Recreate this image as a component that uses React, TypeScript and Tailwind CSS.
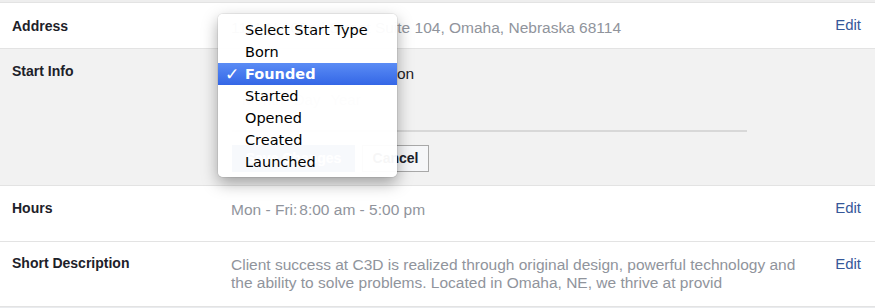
import React from "react";

const sans = { fontFamily: '"Liberation Sans", Arial, Helvetica, sans-serif' };

export default function App() {
  const items = ["Select Start Type", "Born", "Founded", "Started", "Opened", "Created", "Launched"];
  return (
    <div className="relative w-[875px] h-[308px] overflow-hidden bg-[#e9ebee]" style={sans}>
      <div className="h-[2px] bg-[#eeeeee]" />
      <div className="bg-white border-t border-[#e3e3e3]">
        {/* Address */}
        <div className="flex items-start h-[46px] pt-[13px] border-b border-[#e3e3e3]">
          <div className="w-[231px] pl-[12px] text-[14px] leading-[16px] font-bold text-[#1d2129] mt-[2px]">Address</div>
          <div className="flex-1 text-[15.5px] leading-[18px] text-[#90949c] mt-[3px]">1111 N 102nd Street Suite 104, Omaha, Nebraska 68114</div>
          <div className="pr-[14px] pl-4 text-[15px] leading-[18px] text-[#365899]">Edit</div>
        </div>
        {/* Start Info */}
        <div className="flex items-start h-[137px] pt-[14px] bg-[#f2f2f2] border-b border-[#e3e3e3]">
          <div className="w-[232px] pl-[12px] text-[14px] leading-[16px] font-bold text-[#1d2129]">Start Info</div>
          <div className="flex flex-col">
            <div className="flex items-center h-[22px] text-[15.5px] text-[#1d2129]">
              <div className="w-[165px] h-[22px] border border-[#bbb] rounded bg-white px-2 text-[13px] leading-[20px]">Founded</div>
              <span>on</span>
            </div>
            <div className="flex items-center h-[22px] mt-[4px] text-[15px] text-[#c4c6ca]">
              <span className="ml-[10px]">Month</span>
              <span className="ml-[10px]">Day</span>
              <span className="ml-[10px]">Year</span>
            </div>
            <div className="mt-[19px] w-[515px] h-[2px] bg-[#d8d8d8]" />
            <div className="flex gap-[7px] mt-[13px]">
              <button className="w-[123px] h-[27px] bg-[#4267b2] border border-[#4267b2] text-white text-[14px] font-bold">Save Changes</button>
              <button className="w-[67px] h-[27px] bg-[#f6f7f9] border border-[#a8a8a8] text-[#1d2129] text-[14px] font-bold">Cancel</button>
            </div>
          </div>
        </div>
        {/* Hours */}
        <div className="flex items-start h-[56px] pt-[13px] border-b border-[#e3e3e3]">
          <div className="w-[231px] pl-[12px] text-[14px] leading-[16px] font-bold text-[#1d2129] mt-[1px]">Hours</div>
          <div className="flex-1 text-[15.5px] leading-[18px] text-[#90949c] mt-[2px]">
            Mon - Fri:<span className="ml-[2px]">8:00 am - 5:00 pm</span>
          </div>
          <div className="pr-[14px] pl-4 text-[15px] leading-[18px] text-[#365899]">Edit</div>
        </div>
        {/* Short Description */}
        <div className="flex items-start h-[65px] pt-[13px] border-b border-[#e3e3e3]">
          <div className="w-[231px] pl-[12px] text-[14px] leading-[16px] font-bold text-[#1d2129]">Short Description</div>
          <div className="w-[575px] text-[15.5px] leading-[18px] text-[#90949c] mt-[1px]">
            Client success at C3D is realized through original design, powerful technology and the ability to solve problems. Located in Omaha, NE, we thrive at provid
          </div>
          <div className="flex-1" />
          <div className="pr-[14px] pl-4 text-[15px] leading-[18px] text-[#365899]">Edit</div>
        </div>
      </div>

      {/* Dropdown menu overlay */}
      <div
        className="absolute left-[218px] top-[14px] w-[179px] pt-[5px] pb-[4px] rounded-[5px] bg-[rgba(255,255,255,0.96)] shadow-[0_6px_16px_rgba(0,0,0,0.35),0_0_0_1px_rgba(0,0,0,0.06)]"
        style={{ fontFamily: '"DejaVu Sans", "Lucida Grande", sans-serif' }}
      >
        {items.map((it) => {
          const sel = it === "Founded";
          return (
            <div
              key={it}
              className={
                sel
                  ? "relative h-[22px] pl-[27px] text-[14.5px] leading-[22px] text-white font-bold bg-gradient-to-b from-[#5b8cf5] to-[#3466e6]"
                  : "relative h-[22px] pl-[27px] text-[14.5px] leading-[22px] text-black"
              }
            >
              {sel && <span className="absolute left-[7px] top-0 text-[17px] font-bold">✓</span>}
              {it}
            </div>
          );
        })}
      </div>
    </div>
  );
}
